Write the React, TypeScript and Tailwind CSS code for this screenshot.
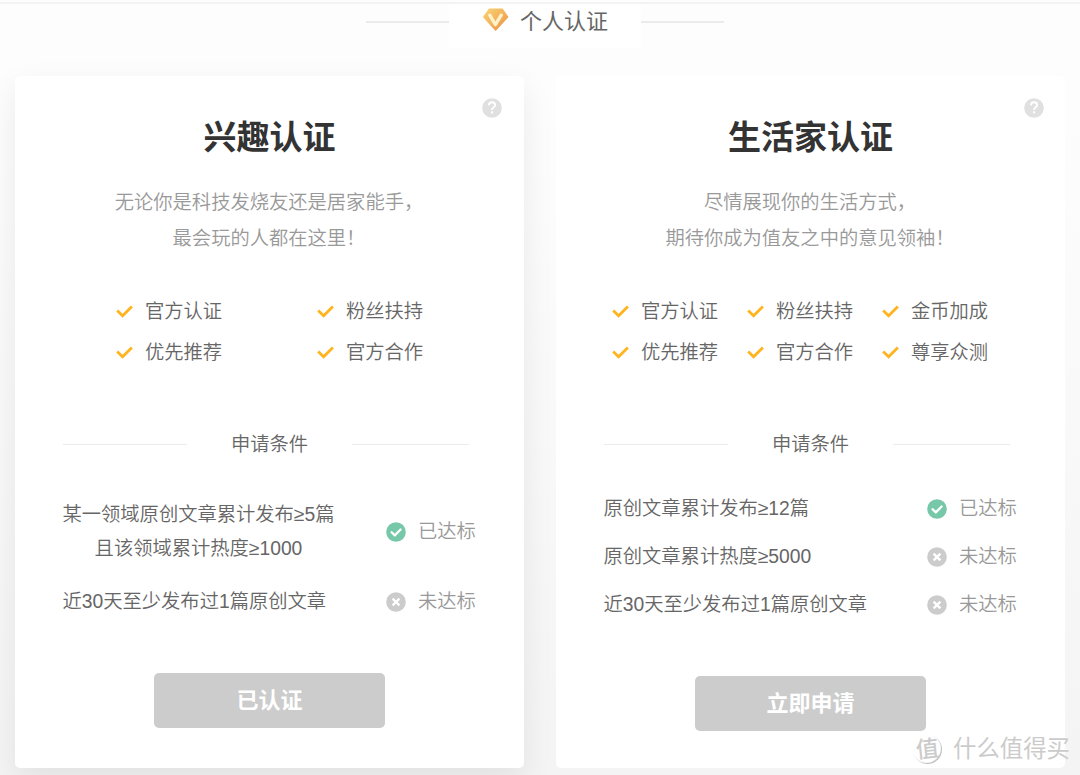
import React from "react";

type Condition = { lines: string[]; met: boolean };

type CardProps = {
  title: string;
  description: string[];
  features: string[];
  wide?: boolean;
  conditions: Condition[];
  action: string;
};

function DiamondIcon() {
  return (
    <svg width="28" height="25" viewBox="0 0 28 25" className="shrink-0">
      <defs>
        <linearGradient id="gem" x1="0" y1="0" x2="1" y2="1">
          <stop offset="0" stopColor="#f8d274" />
          <stop offset="0.5" stopColor="#f4b45c" />
          <stop offset="1" stopColor="#ea8b43" />
        </linearGradient>
      </defs>
      <path
        d="M7.4 2.2h12.8l5.4 7.8L13.6 23 1.8 10z"
        fill="url(#gem)"
        stroke="url(#gem)"
        strokeWidth="1.4"
        strokeLinejoin="round"
      />
      <path
        d="M7.8 8.2l5.6 9.4 5.8-9.4"
        fill="none"
        stroke="#fff1c9"
        strokeWidth="3.4"
        strokeLinecap="round"
        strokeLinejoin="round"
      />
    </svg>
  );
}

function HelpIcon() {
  return (
    <svg width="20" height="20" viewBox="0 0 20 20">
      <circle cx="10" cy="10" r="9.8" fill="#e0e0e0" />
      <path
        d="M6.9 7.3C6.9 5.3 8.2 4.2 10 4.2s3.1 1.1 3.1 2.8c0 2.2-3.1 2.3-3.1 5"
        fill="none"
        stroke="#fff"
        strokeWidth="1.9"
      />
      <rect x="9" y="13.3" width="2.1" height="2.1" fill="#fff" />
    </svg>
  );
}

function Tick() {
  return (
    <svg width="17" height="13" viewBox="0 0 17 13" className="shrink-0">
      <path d="M1.2 5.4l5.4 5.3L15.9 1.6" fill="none" stroke="#ffb41f" strokeWidth="2.8" />
    </svg>
  );
}

function StatusIcon({ met }: { met: boolean }) {
  return (
    <svg width="20" height="20" viewBox="0 0 20 20" className="shrink-0">
      <circle cx="10" cy="10" r="9.8" fill={met ? "#77c8a9" : "#cccccc"} />
      <path
        d={met ? "M5.6 10.2l3.2 3.2 5.8-5.9" : "M6.6 6.6l6.8 6.8M13.4 6.6l-6.8 6.8"}
        fill="none"
        stroke="#fff"
        strokeWidth="2.3"
        strokeLinecap={met ? "round" : "butt"}
        strokeLinejoin="round"
      />
    </svg>
  );
}

function Card({ title, description, features, wide, conditions, action }: CardProps) {
  return (
    <section
      className={`relative flex h-[692px] w-[509px] flex-col items-center rounded-[5px] bg-white pt-[40px] ${
        wide ? "" : "shadow-[0_12px_32px_rgba(0,0,0,0.08)]"
      }`}
    >
      <div className={`absolute top-[22px] ${wide ? "right-[21px]" : "right-[22px]"}`}>
        <HelpIcon />
      </div>
      <h2 className="text-[33px] leading-[44px] font-bold text-[#333]">{title}</h2>
      <div className="mt-[25px] mr-[1px] text-center text-[19.3px] leading-[36px] font-[350] text-[#999]">
        {description.map((line) => (
          <p key={line}>{line}</p>
        ))}
      </div>
      <ul
        className={`mt-[34px] grid self-start text-[19.3px] leading-[41px] font-[350] text-[#666] ${
          wide ? "ml-[56px] grid-cols-[135px_135px_135px]" : "ml-[101px] grid-cols-[201px_201px]"
        }`}
      >
        {features.map((feature) => (
          <li key={feature} className="flex items-center gap-[12px] whitespace-nowrap">
            <Tick />
            {feature}
          </li>
        ))}
      </ul>
      <div className="mt-[57px] flex h-[30px] items-center self-start pl-[48px]">
        <span className="mb-[2px] h-px w-[124px] bg-[#ebebeb]" />
        <span className="w-[165px] text-center text-[19.3px] leading-[30px] font-[350] text-[#666]">
          申请条件
        </span>
        <span className="mb-[2px] h-px w-[117px] bg-[#ebebeb]" />
      </div>
      <ul
        className={`flex w-full flex-col pl-[47.5px] text-[19.3px] font-[350] ${
          wide ? "mt-[25px]" : "mt-[38px] gap-[12px]"
        }`}
      >
        {conditions.map(({ lines, met }) => (
          <li key={lines[0]} className="flex items-center">
            <div className="w-[323.5px]">
              <div
                className={`w-fit text-center whitespace-nowrap text-[#666] ${
                  lines.length > 1 ? "leading-[34px]" : "leading-[48px]"
                }`}
              >
                {lines.map((line) => (
                  <p key={line}>{line}</p>
                ))}
              </div>
            </div>
            <StatusIcon met={met} />
            <span className="ml-[12px] text-[#999]">{met ? "已达标" : "未达标"}</span>
          </li>
        ))}
      </ul>
      <button className="mt-[47px] h-[55px] w-[231px] rounded-[5px] bg-[#ccc] text-[22px] leading-[55px] font-bold text-white">
        {action}
      </button>
    </section>
  );
}

function Watermark() {
  return (
    <div className="absolute top-[735px] left-[913px] flex items-center gap-[11px] text-[#cbcbcb] [text-shadow:-1px_-1px_0_#fff]">
      <span className="flex size-[29px] items-center justify-center rounded-full shadow-[inset_-1px_-1px_1px_#bbb]">
        <span className="-rotate-6 text-[23px] leading-[29px] font-medium">值</span>
      </span>
      <span className="text-[23.4px] leading-[29px] whitespace-nowrap">什么值得买</span>
    </div>
  );
}

export default function App() {
  return (
    <main className="relative h-[775px] w-[1080px] overflow-hidden bg-linear-to-b from-[#fdfdfd] from-15% to-[#f4f4f4] pt-[2px] font-['Liberation_Sans','Noto_Sans_CJK_SC',sans-serif]">
      <div className="h-[2px] bg-[#f3f3f3]" />
      <header className="flex h-[44px] justify-start pl-[366px]">
        <div className="flex w-[358px] items-start">
          <span className="mt-[17px] h-[2px] w-[83px] bg-[#ebebeb]" />
          <div className="flex h-[44px] w-[192px] items-start bg-white pt-[3px] pl-[33px]">
            <DiamondIcon />
            <h1 className="ml-[10px] pt-px text-[22px] leading-[28px] whitespace-nowrap text-[#666]">
              个人认证
            </h1>
          </div>
          <span className="mt-[17px] h-[2px] w-[83px] bg-[#ebebeb]" />
        </div>
      </header>
      <div className="flex gap-[32px] pt-[28px] pl-[15px]">
        <Card
          title="兴趣认证"
          description={["无论你是科技发烧友还是居家能手，", "最会玩的人都在这里！"]}
          features={["官方认证", "粉丝扶持", "优先推荐", "官方合作"]}
          conditions={[
            { lines: ["某一领域原创文章累计发布≥5篇", "且该领域累计热度≥1000"], met: true },
            { lines: ["近30天至少发布过1篇原创文章"], met: false },
          ]}
          action="已认证"
        />
        <Card
          wide
          title="生活家认证"
          description={["尽情展现你的生活方式，", "期待你成为值友之中的意见领袖！"]}
          features={["官方认证", "粉丝扶持", "金币加成", "优先推荐", "官方合作", "尊享众测"]}
          conditions={[
            { lines: ["原创文章累计发布≥12篇"], met: true },
            { lines: ["原创文章累计热度≥5000"], met: false },
            { lines: ["近30天至少发布过1篇原创文章"], met: false },
          ]}
          action="立即申请"
        />
      </div>
      <Watermark />
    </main>
  );
}
